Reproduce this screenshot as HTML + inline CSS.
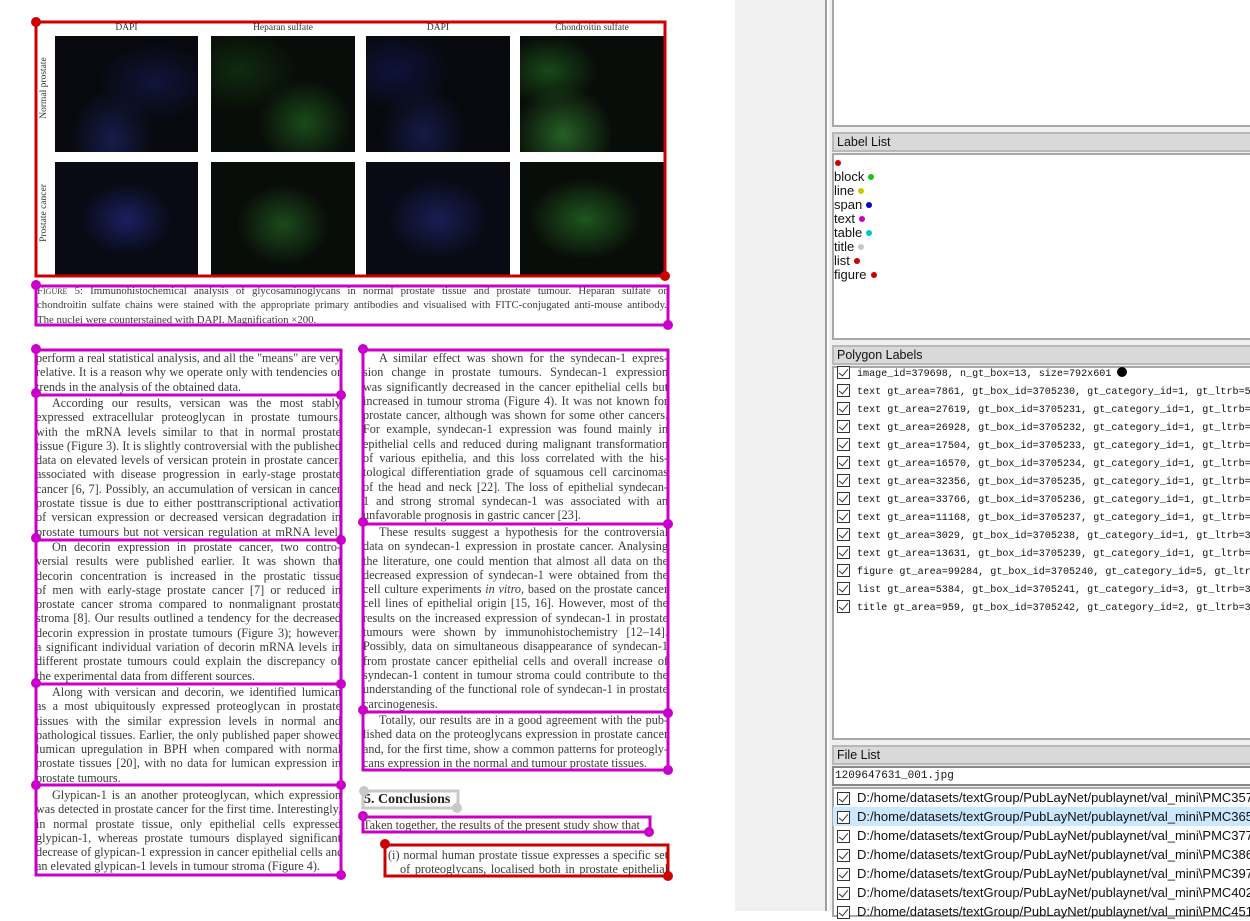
<!DOCTYPE html>
<html><head><meta charset="utf-8"><style>
*{margin:0;padding:0;box-sizing:border-box}
body{width:1250px;height:911px;overflow:hidden;background:#fff;position:relative;font-family:"Liberation Sans",sans-serif}
.col{position:absolute;width:305px;font-family:"Liberation Serif",serif;font-size:12.2px;line-height:14.3px;color:#3a3a3a}
.col div{white-space:nowrap;text-align:justify;text-align-last:justify;overflow:hidden;height:14.3px}
.col div.l{text-align-last:left}
.col div.i{padding-left:16px}
.img{position:absolute;background:#0b0b10}
.lab{position:absolute;font-family:"Liberation Serif",serif;font-size:9.5px;color:#333;text-align:center}
.gray{position:absolute;left:735px;top:0;width:92px;height:911px;background:#f0f0f0;border-right:2px solid #a0a0a0}
.rp{position:absolute;left:829px;top:0;width:421px;height:911px;background:#f0f0f0}
.box{position:absolute;left:832px;width:430px;background:#fff;border:2px solid #a8a8a8}
.hdr{position:absolute;left:832px;width:430px;height:20px;background:#d9d9d9;border:2px solid #b8b8b8;font-size:12.5px;color:#111;padding:1px 0 0 3px;line-height:15px}
.ll{position:absolute;left:834px;font-size:13px;line-height:14px;color:#111}
.dot{display:inline-block;width:6px;height:6px;border-radius:50%;margin-left:4px;vertical-align:1px}
.pl{position:absolute;left:837px;font-family:"Liberation Mono",monospace;font-size:10.1px;color:#111;white-space:nowrap;height:18px;line-height:18px}
.cb{display:inline-block;width:13px;height:13px;border:1px solid #333;background:#fff;vertical-align:-3px;margin-right:7px;position:relative}
.cb:after{content:"";position:absolute;left:3px;top:0px;width:4px;height:8px;border:solid #333;border-width:0 1.3px 1.3px 0;transform:rotate(40deg)}
.fl{position:absolute;left:833px;width:420px;font-size:13px;color:#111;white-space:nowrap;height:19px;line-height:19px;padding-left:4px}
</style></head><body>

<div class="lab" style="left:55px;top:23px;width:143px">DAPI</div>
<div class="lab" style="left:211px;top:23px;width:144px">Heparan sulfate</div>
<div class="lab" style="left:366px;top:23px;width:144px">DAPI</div>
<div class="lab" style="left:520px;top:23px;width:144px">Chondroitin sulfate</div>
<div class="lab" style="left:-6px;top:83px;width:100px;transform:rotate(-90deg)">Normal prostate</div>
<div class="lab" style="left:-6px;top:208px;width:100px;transform:rotate(-90deg)">Prostate cancer</div>

<div class="img" style="left:55px;top:36px;width:143px;height:116px;background:radial-gradient(ellipse at 40% 90%,#161c4a 0,transparent 35%),radial-gradient(ellipse at 70% 40%,#10143a 0,transparent 40%),#08090f"></div>
<div class="img" style="left:211px;top:36px;width:144px;height:116px;background:radial-gradient(ellipse at 65% 75%,#1a4a1a 0,transparent 35%),radial-gradient(ellipse at 20% 30%,#0f2a0f 0,transparent 35%),#090d09"></div>
<div class="img" style="left:366px;top:36px;width:144px;height:116px;background:radial-gradient(ellipse at 40% 85%,#151a46 0,transparent 35%),radial-gradient(ellipse at 20% 30%,#0f123a 0,transparent 35%),#08090f"></div>
<div class="img" style="left:520px;top:36px;width:144px;height:116px;background:radial-gradient(ellipse at 30% 85%,#256025 0,transparent 35%),radial-gradient(ellipse at 20% 30%,#184818 0,transparent 30%),#090d09"></div>
<div class="img" style="left:55px;top:162px;width:143px;height:114px;background:radial-gradient(ellipse at 50% 50%,#1a2060 0,transparent 45%),#090a14"></div>
<div class="img" style="left:211px;top:162px;width:144px;height:114px;background:radial-gradient(ellipse at 50% 55%,#1c4a1c 0,transparent 45%),#090d09"></div>
<div class="img" style="left:366px;top:162px;width:144px;height:114px;background:radial-gradient(ellipse at 50% 50%,#181e54 0,transparent 50%),#090a14"></div>
<div class="img" style="left:520px;top:162px;width:144px;height:114px;background:radial-gradient(ellipse at 45% 50%,#1e561e 0,transparent 50%),#090d09"></div>

<div class="col" style="left:37px;top:285px;width:630px;font-size:10.8px;line-height:13.5px">
<div><span style="font-variant:small-caps">Figure</span> 5: Immunohistochemical analysis of glycosaminoglycans in normal prostate tissue and prostate tumour. Heparan sulfate or</div>
<div>chondroitin sulfate chains were stained with the appropriate primary antibodies and visualised with FITC-conjugated anti-mouse antibody.</div>
<div class="l">The nuclei were counterstained with DAPI. Magnification ×200.</div>
</div>

<div class="col" style="left:36px;top:351px">
<div>perform a real statistical analysis, and all the "means" are very</div>
<div>relative. It is a reason why we operate only with tendencies or</div>
<div class="l">trends in the analysis of the obtained data.</div>
</div>
<div class="col" style="left:36px;top:396px">
<div class="i">According our results, versican was the most stably</div>
<div>expressed extracellular proteoglycan in prostate tumours,</div>
<div>with the mRNA levels similar to that in normal prostate</div>
<div>tissue (Figure 3). It is slightly controversial with the published</div>
<div>data on elevated levels of versican protein in prostate cancer,</div>
<div>associated with disease progression in early-stage prostate</div>
<div>cancer [6, 7]. Possibly, an accumulation of versican in cancer</div>
<div>prostate tissue is due to either posttranscriptional activation</div>
<div>of versican expression or decreased versican degradation in</div>
<div>prostate tumours but not versican regulation at mRNA level.</div>
</div>
<div class="col" style="left:36px;top:540px">
<div class="i">On decorin expression in prostate cancer, two contro-</div>
<div>versial results were published earlier. It was shown that</div>
<div>decorin concentration is increased in the prostatic tissue</div>
<div>of men with early-stage prostate cancer [7] or reduced in</div>
<div>prostate cancer stroma compared to nonmalignant prostate</div>
<div>stroma [8]. Our results outlined a tendency for the decreased</div>
<div>decorin expression in prostate tumours (Figure 3); however,</div>
<div>a significant individual variation of decorin mRNA levels in</div>
<div>different prostate tumours could explain the discrepancy of</div>
<div class="l">the experimental data from different sources.</div>
</div>
<div class="col" style="left:36px;top:685px">
<div class="i">Along with versican and decorin, we identified lumican</div>
<div>as a most ubiquitously expressed proteoglycan in prostate</div>
<div>tissues with the similar expression levels in normal and</div>
<div>pathological tissues. Earlier, the only published paper showed</div>
<div>lumican upregulation in BPH when compared with normal</div>
<div>prostate tissues [20], with no data for lumican expression in</div>
<div class="l">prostate tumours.</div>
</div>
<div class="col" style="left:36px;top:788px">
<div class="i">Glypican-1 is an another proteoglycan, which expression</div>
<div>was detected in prostate cancer for the first time. Interestingly,</div>
<div>in normal prostate tissue, only epithelial cells expressed</div>
<div>glypican-1, whereas prostate tumours displayed significant</div>
<div>decrease of glypican-1 expression in cancer epithelial cells and</div>
<div class="l">an elevated glypican-1 levels in tumour stroma (Figure 4).</div>
</div>

<div class="col" style="left:363px;top:351px">
<div class="i">A similar effect was shown for the syndecan-1 expres-</div>
<div>sion change in prostate tumours. Syndecan-1 expression</div>
<div>was significantly decreased in the cancer epithelial cells but</div>
<div>increased in tumour stroma (Figure 4). It was not known for</div>
<div>prostate cancer, although was shown for some other cancers.</div>
<div>For example, syndecan-1 expression was found mainly in</div>
<div>epithelial cells and reduced during malignant transformation</div>
<div>of various epithelia, and this loss correlated with the his-</div>
<div>tological differentiation grade of squamous cell carcinomas</div>
<div>of the head and neck [22]. The loss of epithelial syndecan-</div>
<div>1 and strong stromal syndecan-1 was associated with an</div>
<div class="l">unfavorable prognosis in gastric cancer [23].</div>
</div>
<div class="col" style="left:363px;top:525px">
<div class="i">These results suggest a hypothesis for the controversial</div>
<div>data on syndecan-1 expression in prostate cancer. Analysing</div>
<div>the literature, one could mention that almost all data on the</div>
<div>decreased expression of syndecan-1 were obtained from the</div>
<div>cell culture experiments <i>in vitro</i>, based on the prostate cancer</div>
<div>cell lines of epithelial origin [15, 16]. However, most of the</div>
<div>results on the increased expression of syndecan-1 in prostate</div>
<div>tumours were shown by immunohistochemistry [12–14].</div>
<div>Possibly, data on simultaneous disappearance of syndecan-1</div>
<div>from prostate cancer epithelial cells and overall increase of</div>
<div>syndecan-1 content in tumour stroma could contribute to the</div>
<div>understanding of the functional role of syndecan-1 in prostate</div>
<div class="l">carcinogenesis.</div>
</div>
<div class="col" style="left:363px;top:713px">
<div class="i">Totally, our results are in a good agreement with the pub-</div>
<div>lished data on the proteoglycans expression in prostate cancer</div>
<div>and, for the first time, show a common patterns for proteogly-</div>
<div class="l">cans expression in the normal and tumour prostate tissues.</div>
</div>
<div class="col" style="left:364px;top:791px;font-size:14px;line-height:17px;font-weight:bold;color:#222"><div class="l" style="height:17px">5. Conclusions</div></div>
<div class="col" style="left:363px;top:818px"><div class="l">Taken together, the results of the present study show that</div></div>
<div class="col" style="left:388px;top:848px;width:280px"><div>(i) normal human prostate tissue expresses a specific set</div></div>
<div class="col" style="left:400px;top:862px;width:268px"><div>of proteoglycans, localised both in prostate epithelial</div></div>

<svg style="position:absolute;left:0;top:0" width="735" height="911">
<g fill="none" stroke-width="3">
<rect x="36" y="22" width="629" height="254" stroke="#cc0000"/>
<rect x="36" y="286" width="632" height="39" stroke="#c800c8"/>
<rect x="36" y="350" width="305" height="45" stroke="#c800c8"/>
<rect x="36" y="395" width="305" height="145" stroke="#c800c8"/>
<rect x="36" y="540" width="305" height="144" stroke="#c800c8"/>
<rect x="36" y="684" width="305" height="101" stroke="#c800c8"/>
<rect x="36" y="785" width="305" height="90" stroke="#c800c8"/>
<rect x="363" y="350" width="305" height="174" stroke="#c800c8"/>
<rect x="363" y="524" width="305" height="188" stroke="#c800c8"/>
<rect x="363" y="712" width="305" height="58" stroke="#c800c8"/>
<rect x="363" y="791" width="95" height="17" stroke="#c8c8c8"/>
<rect x="363" y="817" width="287" height="15" stroke="#c800c8"/>
<rect x="385" y="845" width="283" height="31" stroke="#cc0000"/>
</g>
<g fill="#c800c8">
<circle cx="36" cy="285" r="5"/><circle cx="668" cy="325" r="5"/>
<circle cx="36" cy="349" r="5"/><circle cx="341" cy="395" r="5"/>
<circle cx="36" cy="393" r="5"/><circle cx="341" cy="540" r="5"/>
<circle cx="36" cy="538" r="5"/><circle cx="341" cy="684" r="5"/>
<circle cx="36" cy="683" r="5"/><circle cx="341" cy="785" r="5"/>
<circle cx="36" cy="785" r="5"/><circle cx="341" cy="875" r="5"/>
<circle cx="363" cy="349" r="5"/><circle cx="668" cy="524" r="5"/>
<circle cx="363" cy="522" r="5"/><circle cx="668" cy="713" r="5"/>
<circle cx="363" cy="710" r="5"/><circle cx="668" cy="770" r="5"/>
<circle cx="363" cy="816" r="5"/><circle cx="649" cy="832" r="5"/>
</g>
<g fill="#c8c8c8"><circle cx="364" cy="791" r="5"/><circle cx="457" cy="808" r="5"/></g>
<g fill="#cc0000"><circle cx="36" cy="22" r="5"/><circle cx="665" cy="276" r="5"/><circle cx="385" cy="844" r="5"/><circle cx="668" cy="876" r="5"/></g>
</svg>

<div class="gray"></div>
<div class="rp"></div>
<div class="box" style="top:-2px;height:129px"></div>
<div class="hdr" style="top:132px">Label List</div>
<div class="box" style="top:153px;height:187px"></div>
<div class="ll" style="top:156px"><span class="dot" style="background:#c80000;margin-left:1px"></span></div>
<div class="ll" style="top:170px">block<span class="dot" style="background:#10c810"></span><br>line<span class="dot" style="background:#c8c800"></span><br>span<span class="dot" style="background:#0000c8"></span><br>text<span class="dot" style="background:#c800c8"></span><br>table<span class="dot" style="background:#00c8c8"></span><br>title<span class="dot" style="background:#c8c8c8"></span><br>list<span class="dot" style="background:#c80000"></span><br>figure<span class="dot" style="background:#c80000"></span></div>

<div class="hdr" style="top:345px">Polygon Labels</div>
<div class="box" style="top:366px;height:374px"></div>
<div class="pl" style="top:366px"><span class="cb"></span>image_id=379698, n_gt_box=13, size=792x601 <span style="display:inline-block;width:10px;height:10px;border-radius:50%;background:#000;vertical-align:-1px"></span></div>
<div class="pl" style="top:384px"><span class="cb"></span>text gt_area=7861, gt_box_id=3705230, gt_category_id=1, gt_ltrb=51</div>
<div class="pl" style="top:402px"><span class="cb"></span>text gt_area=27619, gt_box_id=3705231, gt_category_id=1, gt_ltrb=5</div>
<div class="pl" style="top:420px"><span class="cb"></span>text gt_area=26928, gt_box_id=3705232, gt_category_id=1, gt_ltrb=5</div>
<div class="pl" style="top:438px"><span class="cb"></span>text gt_area=17504, gt_box_id=3705233, gt_category_id=1, gt_ltrb=5</div>
<div class="pl" style="top:456px"><span class="cb"></span>text gt_area=16570, gt_box_id=3705234, gt_category_id=1, gt_ltrb=5</div>
<div class="pl" style="top:474px"><span class="cb"></span>text gt_area=32356, gt_box_id=3705235, gt_category_id=1, gt_ltrb=3</div>
<div class="pl" style="top:492px"><span class="cb"></span>text gt_area=33766, gt_box_id=3705236, gt_category_id=1, gt_ltrb=3</div>
<div class="pl" style="top:510px"><span class="cb"></span>text gt_area=11168, gt_box_id=3705237, gt_category_id=1, gt_ltrb=3</div>
<div class="pl" style="top:528px"><span class="cb"></span>text gt_area=3029, gt_box_id=3705238, gt_category_id=1, gt_ltrb=30</div>
<div class="pl" style="top:546px"><span class="cb"></span>text gt_area=13631, gt_box_id=3705239, gt_category_id=1, gt_ltrb=5</div>
<div class="pl" style="top:564px"><span class="cb"></span>figure gt_area=99284, gt_box_id=3705240, gt_category_id=5, gt_ltrb</div>
<div class="pl" style="top:582px"><span class="cb"></span>list gt_area=5384, gt_box_id=3705241, gt_category_id=3, gt_ltrb=32</div>
<div class="pl" style="top:600px"><span class="cb"></span>title gt_area=959, gt_box_id=3705242, gt_category_id=2, gt_ltrb=30</div>

<div class="hdr" style="top:745px">File List</div>
<div class="box" style="top:766px;height:20px;border-color:#888;font-family:'Liberation Mono',monospace;font-size:11px;padding:2px 0 0 1px;color:#111">1209647631_001.jpg</div>
<div class="box" style="top:787px;height:130px"></div>
<div class="fl" style="top:788px"><span class="cb"></span>D:/home/datasets/textGroup/PubLayNet/publaynet/val_mini\PMC357</div>
<div class="fl" style="top:807px;background:#cce8ff"><span class="cb"></span>D:/home/datasets/textGroup/PubLayNet/publaynet/val_mini\PMC365</div>
<div class="fl" style="top:826px"><span class="cb"></span>D:/home/datasets/textGroup/PubLayNet/publaynet/val_mini\PMC377</div>
<div class="fl" style="top:845px"><span class="cb"></span>D:/home/datasets/textGroup/PubLayNet/publaynet/val_mini\PMC386</div>
<div class="fl" style="top:864px"><span class="cb"></span>D:/home/datasets/textGroup/PubLayNet/publaynet/val_mini\PMC397</div>
<div class="fl" style="top:883px"><span class="cb"></span>D:/home/datasets/textGroup/PubLayNet/publaynet/val_mini\PMC402</div>
<div class="fl" style="top:902px"><span class="cb"></span>D:/home/datasets/textGroup/PubLayNet/publaynet/val_mini\PMC451</div>
</body></html>
